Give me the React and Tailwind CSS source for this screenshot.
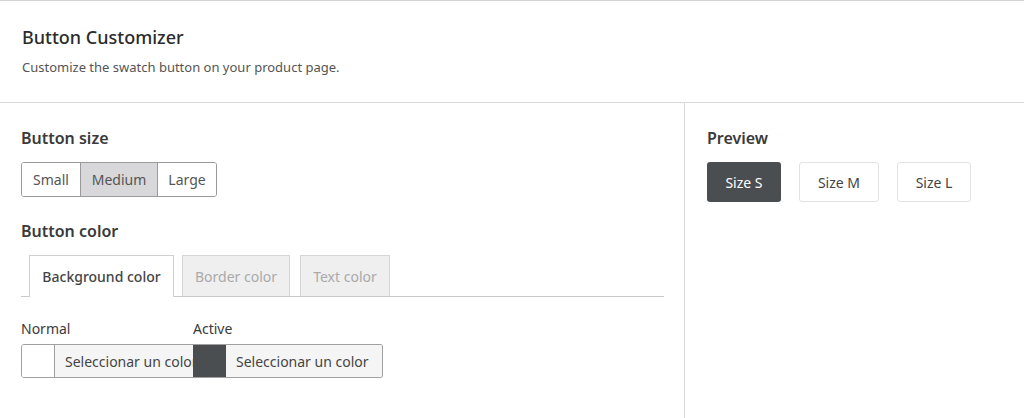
export default function App() {
  return (
    <div
      className="h-[418px] w-[1024px] overflow-hidden border-t border-[#d4d4d4] bg-white text-[#333]"
      style={{ fontFamily: '"Noto Sans", "Open Sans", sans-serif' }}
    >
      {/* Header */}
      <div className="h-[102px] border-b border-[#d9d9d9] px-[22px] pt-[24px]">
        <h1 className="text-[18px] font-medium leading-[24px] text-[#2b2b2b]">Button Customizer</h1>
        <p className="mt-[9px] text-[13px] leading-[18px] text-[#555]">
          Customize the swatch button on your product page.
        </p>
      </div>

      <div className="flex h-[315px]">
        {/* Left column */}
        <div className="w-[685px] border-r border-[#d9d9d9] pl-[21px] pr-[20px] pt-[24px]">
          <h2 className="text-[16px] font-semibold leading-[22px] text-[#3a3a3a]">Button size</h2>
          <div className="mt-[13px] inline-flex h-[35px] overflow-hidden rounded-[3px] border border-[#9a9a9a] text-[14px] text-[#555]">
            <button className="w-[58px] bg-white">Small</button>
            <button className="w-[78px] border-x border-[#9a9a9a] bg-[#d8d8da]">Medium</button>
            <button className="w-[58px] bg-white">Large</button>
          </div>

          <h2 className="mt-[23px] text-[16px] font-semibold leading-[22px] text-[#3a3a3a]">Button color</h2>
          <div className="mt-[13px] flex h-[42px] w-[643px] items-end gap-[8px] border-b border-[#c9c9c9] pl-[8px]">
            <div className="-mb-px flex h-[42px] w-[145px] items-center justify-center border border-b-0 border-[#d0d0d0] bg-white text-[14px] font-medium text-[#444]">
              Background color
            </div>
            <div className="flex h-[41px] w-[108px] items-center justify-center border border-b-0 border-[#d6d6d6] bg-[#efeff0] text-[14px] text-[#aaa]">
              Border color
            </div>
            <div className="ml-[2px] flex h-[41px] w-[90px] items-center justify-center border border-b-0 border-[#d6d6d6] bg-[#efeff0] text-[14px] text-[#aaa]">
              Text color
            </div>
          </div>

          <div className="mt-[22px] flex">
            <div className="w-[172px] overflow-hidden">
              <div className="text-[14px] leading-[20px] text-[#3a3a3a]">Normal</div>
              <div className="mt-[5px] flex h-[34px] w-[200px] overflow-hidden rounded-l-[3px] border border-[#a0a0a0]">
                <div className="w-[33px] shrink-0 border-r border-[#a0a0a0] bg-white" />
                <div className="flex items-center whitespace-nowrap bg-[#f5f5f5] pl-[10px] text-[14px] text-[#444]">
                  Seleccionar un color
                </div>
              </div>
            </div>
            <div>
              <div className="text-[14px] leading-[20px] text-[#3a3a3a]">Active</div>
              <div className="mt-[5px] flex h-[34px] w-[190px] overflow-hidden rounded-r-[3px] border border-l-0 border-[#a0a0a0]">
                <div className="w-[33px] shrink-0 bg-[#4b4e50]" />
                <div className="flex flex-1 items-center whitespace-nowrap bg-[#f5f5f5] pl-[10px] text-[14px] text-[#444]">
                  Seleccionar un color
                </div>
              </div>
            </div>
          </div>
        </div>

        {/* Right column */}
        <div className="flex-1 pl-[22px] pt-[24px]">
          <h2 className="text-[16px] font-semibold leading-[22px] text-[#3a3a3a]">Preview</h2>
          <div className="mt-[13px] flex gap-[18px] text-[14px]">
            <button className="h-[40px] w-[74px] rounded-[3px] bg-[#4b4e50] text-white">Size S</button>
            <button className="h-[40px] w-[80px] rounded-[3px] border border-[#e3e3e3] bg-white text-[#444]">Size M</button>
            <button className="h-[40px] w-[74px] rounded-[3px] border border-[#e3e3e3] bg-white text-[#444]">Size L</button>
          </div>
        </div>
      </div>
    </div>
  );
}
